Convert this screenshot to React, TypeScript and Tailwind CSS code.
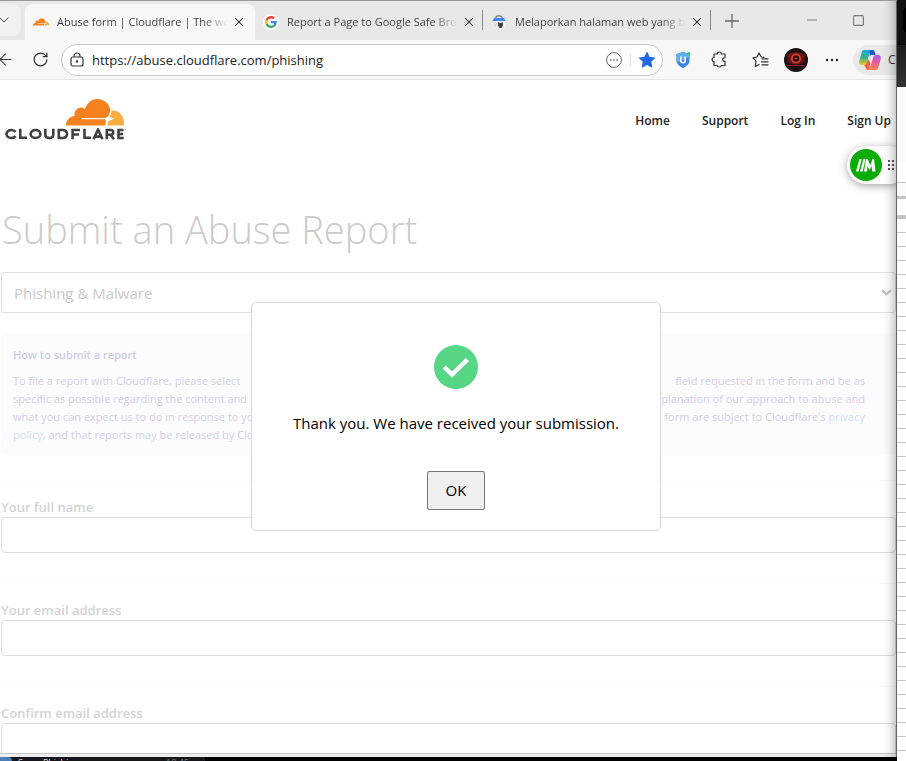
import React from "react";
import { ArrowLeft, ChevronDown, Minus, Plus, RotateCw, Square, X } from "lucide-react";

function CloudIcon({ className }: { className: string }) {
  return (
    <svg viewBox="0 0 58 27" className={className} aria-hidden="true">
      <path
        fill="#f6821f"
        d="M0 26.500C0 21 3.500 17.500 8.500 17C8 12 11 8.500 15 8.500C16.500 8.500 18 9 19 10C21 4 25.500 0 31.500 0C38.500 0 43.500 5 44.500 11.500L42.500 17L39.500 19H15.500V20.300H39L40 22.500L39 26.500Z"
      />
      <path
        fill="#fbad41"
        d="M46.500 11.500C53 11.500 58 17 58 23.500C58 25 57.800 26 57.500 26.500H41.500L42.500 22L48 19.700L43.800 18L46 11.500Z"
      />
    </svg>
  );
}

function GoogleIcon() {
  return (
    <span className="flex size-4 shrink-0 items-center justify-center rounded-full bg-white">
      <svg viewBox="0 0 48 48" className="size-3" aria-hidden="true">
        <path fill="#ea4335" d="M24 9.500c3.500 0 6.700 1.200 9.200 3.600l6.900-6.900C35.900 2.400 30.500 0 24 0 14.600 0 6.500 5.400 2.600 13.200l8 6.200C12.400 13.700 17.700 9.500 24 9.500z" />
        <path fill="#4285f4" d="M47 24.500c0-1.600-.2-3.100-.4-4.500H24v9h12.900c-.6 3-2.200 5.500-4.700 7.200l7.700 6C44.400 38 47 31.800 47 24.500z" />
        <path fill="#fbbc05" d="M10.500 28.600c-.5-1.500-.8-3-.8-4.600s.3-3.100.8-4.600l-8-6.200C.9 16.500 0 20.100 0 24s.9 7.500 2.600 10.800z" />
        <path fill="#34a853" d="M24 48c6.500 0 11.900-2.100 15.900-5.800l-7.700-6c-2.200 1.500-4.900 2.300-8.200 2.300-6.300 0-11.600-4.200-13.500-9.900l-8 6.200C6.500 42.600 14.600 48 24 48z" />
      </svg>
    </span>
  );
}

function ReportIcon() {
  return (
    <svg viewBox="0 0 16 16" className="size-4 shrink-0" aria-hidden="true">
      <path d="M5 4V3.300C5 2.300 6 1.800 8 1.800s3 .5 3 1.500V4" fill="none" stroke="#777" strokeWidth="1.300" />
      <path d="M3 4h10l1.500 3H1.500z" fill="#4285f4" />
      <path d="M2.500 7h11v6.500h-11z" fill="#f4f6fa" />
      <path d="M4 8v5M6 8v5" stroke="#c5cad3" />
      <path d="M7 8l2.500 1.300L12 8v3.500L10.500 14h-2L7 11.500z" fill="#444" />
    </svg>
  );
}

function Wordmark() {
  return (
    <svg viewBox="0 0 121 12" className="h-3 w-[121px]" role="img" aria-label="Cloudflare">
      <g fill="none" stroke="#404041" strokeWidth="2.600">
        <path d="M10.500 4C9.500 2.500 8 2 6.300 2C3.500 2 1.500 3.700 1.500 6S3.500 10 6.300 10C8 10 9.500 9.500 10.500 8" />
        <path d="M15.300 .8V9.700H22" />
        <ellipse cx="30.500" cy="6" rx="4.900" ry="4" />
        <path d="M40.300 .8V6.500C40.300 9 41.800 10 44.300 10S48.300 9 48.300 6.500V.8" />
        <path d="M53.800 2H57.500C60.500 2 62 3.800 62 6S60.500 10 57.500 10H53.800Z" />
        <path d="M75 2H67.600V11.200M67.600 6.500H74" />
        <path d="M79.500 .8V9.700H86" />
        <path d="M88.500 11.200L93 1.500L97.500 11.200M90.500 8.600H95.500" />
        <path d="M101.800 11.200V2H106C109 2 109 6.700 106 6.700H101.800M105.500 6.700L109 11.200" />
        <path d="M118.500 2H113.500V10H118.700M113.500 6H118" />
      </g>
      <circle cx="120.300" cy="1.500" r=".6" fill="#777" />
    </svg>
  );
}

function CopilotIcon() {
  return (
    <svg viewBox="0 0 22 20" className="h-5 w-[22px] shrink-0" aria-hidden="true">
      <defs>
        <linearGradient id="cpA" x1="0" y1="0" x2="0" y2="1">
          <stop offset="0" stopColor="#1ba8e8" />
          <stop offset=".5" stopColor="#35b08a" />
          <stop offset="1" stopColor="#f5c518" />
        </linearGradient>
        <linearGradient id="cpB" x1="0" y1="0" x2="0" y2="1">
          <stop offset="0" stopColor="#a05cf0" />
          <stop offset=".5" stopColor="#ec5a9c" />
          <stop offset="1" stopColor="#fb8a4c" />
        </linearGradient>
      </defs>
      <path d="M5 0H13L10 5L8 12C7.500 14 6.500 15 5 15H3C0 15 0 12.500 .5 10L2.500 3C3 1 3.700 0 5 0Z" fill="url(#cpA)" />
      <path d="M11 0H13.500C15 0 15.500 1 16 3L16.500 5H13C11.500 5 11 5.500 10.500 7Z" fill="#1559d6" />
      <path d="M17 20H9L12 15L14 8C14.500 6 15.500 5 17 5H19C22 5 22 7.500 21.500 10L19.500 17C19 19 18.300 20 17 20Z" fill="url(#cpB)" />
      <path d="M5 15C6.500 15 7.500 14 8 12L9 9L11.500 13L9.500 20C7.500 20 7 19 6.500 17Z" fill="#f2603c" />
    </svg>
  );
}

function Tab({ icon, title, className }: { icon: React.ReactNode; title: string; className: string }) {
  return (
    <div className={`flex h-9 shrink-0 items-center pl-2 ${className}`}>
      {icon}
      <span className="ml-2 w-[171px] bg-linear-to-r from-[#3a3a3a] from-85% to-transparent bg-clip-text text-[11px] leading-5 whitespace-nowrap text-transparent">
        {title}
      </span>
      <button aria-label="Close tab" className="ml-1 text-[#222]">
        <X size={14} strokeWidth={1.8} />
      </button>
    </div>
  );
}

function Toolbar() {
  return (
    <div className="flex h-10 items-center overflow-hidden border-b border-[#e6e6e6] bg-[#f7f7f7] text-[#333]">
      <button aria-label="Back" className="-ml-1 shrink-0">
        <ArrowLeft size={19} strokeWidth={1.3} />
      </button>
      <button aria-label="Reload" className="ml-[17px] shrink-0">
        <RotateCw size={17} strokeWidth={1.7} />
      </button>
      <div className="ml-3 flex h-8 min-w-0 flex-1 items-center rounded-full border border-[#c9c9c9] bg-white pr-[7px] pl-2">
        <svg viewBox="0 0 14 16" className="h-4 w-3.5 shrink-0" fill="none" stroke="#333" strokeWidth="1.200" aria-hidden="true">
          <rect x="1" y="5" width="12" height="9" rx="2" />
          <path d="M4 5V4a3 3 0 016 0v1" />
          <circle cx="7" cy="9.500" r=".6" fill="#333" />
        </svg>
        <input
          aria-label="Address"
          defaultValue="https://abuse.cloudflare.com/phishing"
          className="ml-2 min-w-0 flex-1 bg-transparent pt-0.5 text-[13px] text-[#222] outline-none"
        />
        <svg viewBox="0 0 16 16" className="size-4 shrink-0" fill="none" stroke="#666" aria-hidden="true">
          <circle cx="8" cy="8" r="7.400" />
          <path d="M4 8h1.500M7.300 8h1.500M10.500 8H12" strokeWidth="1.500" />
        </svg>
        <span className="ml-2 h-3.5 w-px bg-[#ddd]" />
        <svg viewBox="0 0 24 24" className="ml-2 size-4 shrink-0" fill="#2168ea" stroke="#2168ea" strokeWidth="2" strokeLinejoin="round" aria-hidden="true">
          <path d="M12 1l3.300 7.200 7.700.9-5.700 5.300 1.500 7.800L12 18.300 5.200 22.200l1.500-7.800L1 9.100l7.700-.9z" />
        </svg>
      </div>
      <div className="flex w-[233px] shrink-0 items-center pl-3">
        <svg viewBox="0 0 16 18" className="h-[18px] w-4 shrink-0" aria-hidden="true">
          <path d="M8 1l6.500 2v6c0 4-3 6.500-6.500 8C4.500 15.500 1.500 13 1.500 9V3z" fill="#3f86e0" />
          <path d="M8 1L1.500 3v6c0 1 .2 2 .5 2.800L14.500 6V3z" fill="#5cb0ee" />
          <path d="M5.800 5.500v4a2.200 2.200 0 004.400 0v-4" fill="none" stroke="#fff" strokeWidth="1.600" />
          <circle cx="13.800" cy="2.500" r="1.600" fill="#2dbf8d" />
        </svg>
        <button aria-label="Extensions" className="ml-5">
          <svg viewBox="0 0 17 17" className="size-[17px]" fill="none" stroke="#333" strokeWidth="1.200" strokeLinejoin="round" aria-hidden="true">
            <path d="M3 3H6.300C6.300 .3 10.300 .3 10.300 3H14V6.800C12.800 6.500 11.700 7.300 11.700 8.500S12.800 10.500 14 10.200V14.500H10.300C10.300 16.500 6.300 16.500 6.300 14.500H3V10.500C.5 10.500 .5 6.500 3 6.500Z" />
          </svg>
        </button>
        <span className="ml-3 h-4 w-px bg-[#ccc]" />
        <svg viewBox="0 0 18 16" className="ml-3 h-4 w-[18px] shrink-0" fill="none" stroke="#333" strokeWidth="1.200" strokeLinejoin="round" strokeLinecap="round" aria-hidden="true">
          <path d="M12 5.300L9.300 5 7 1 5 5 1 5.800l3 3.400-.8 5.300 3.800-2" />
          <path d="M10 6.800H16M9.500 9.800h6.500M10 12.800H16" />
        </svg>
        <svg viewBox="0 0 24 24" className="ml-3.5 size-6 shrink-0" aria-label="Profile" role="img">
          <circle cx="12" cy="12" r="12" fill="#1b1012" />
          <path d="M3 7Q12 1 21 7L20 14Q12 19 4 14Z" fill="#6d1516" />
          <circle cx="12" cy="10.500" r="5" fill="#d9402f" />
          <circle cx="12" cy="10.500" r="3.200" fill="#2a080a" />
          <circle cx="12" cy="10.500" r="1" fill="#e0523f" />
          <path d="M3 17.500h18" stroke="#8c2020" />
        </svg>
        <svg viewBox="0 0 14 4" className="ml-[17px] h-1 w-3.5 shrink-0" fill="#222" aria-hidden="true">
          <circle cx="2" cy="2" r="1.200" />
          <circle cx="7" cy="2" r="1.200" />
          <circle cx="12" cy="2" r="1.200" />
        </svg>
        <button className="ml-3.5 flex h-[30px] items-center gap-[7px] rounded-l-full bg-[#e8e8e8] pl-1.5 text-xs whitespace-nowrap">
          <CopilotIcon />
          Copilot
        </button>
      </div>
    </div>
  );
}

function Field({ id, label }: { id: string; label: string }) {
  return (
    <div className="ml-px border-t border-[#fafafa] pt-4 pb-[30px]">
      <label htmlFor={id} className="block text-[13px] leading-5 font-semibold text-[#d3d3d3]">
        {label}
      </label>
      <input id={id} type="text" className="block h-9 w-full rounded border border-[#dcdcdc] bg-white" />
    </div>
  );
}

const infoLines = [
  ["To file a report with Cloudflare, please select", "field requested in the form and be as"],
  ["specific as possible regarding the content and", "explanation of our approach to abuse and"],
];

function Page() {
  return (
    <main className="relative flex-1 overflow-hidden bg-white">
      <header className="flex items-start justify-between pt-[19px] pr-[5px] pl-[5px]">
        <a href="#home" className="flex flex-col items-start">
          <CloudIcon className="ml-[61px] h-[27px] w-[58px]" />
          <span className="mt-0.5">
            <Wordmark />
          </span>
        </a>
        <nav className="flex gap-8 pt-3 text-xs leading-5 font-semibold text-[#222]">
          <a href="#home">Home</a>
          <a href="#support">Support</a>
          <a href="#login">Log In</a>
          <a href="#signup">Sign Up</a>
        </nav>
      </header>
      <h1 className="mt-[65px] ml-0.5 text-[38px] leading-[48px] font-light text-[#cbcbcb]">Submit an Abuse Report</h1>
      <div className="relative mt-[19px] ml-px">
        <select
          aria-label="Report type"
          className="block h-[41px] w-full appearance-none rounded-[3px] border border-[#e0e0e0] bg-white px-3 pt-0.5 text-[15px] text-[#c8c8c8]"
        >
          <option>Phishing &amp; Malware</option>
        </select>
        <ChevronDown size={15} strokeWidth={3.5} className="pointer-events-none absolute top-[13px] right-0.5 text-[#c4c4c4]" />
      </div>
      <section className="mt-5 mb-[25px] ml-px rounded-sm bg-[#fcfcff] pt-3 pb-[11px] pl-3 text-[11px] leading-[18px] text-[#d3cfe6]">
        <h2 className="mb-[7px] leading-5 font-semibold text-[#d0cbe6]">How to submit a report</h2>
        <div className="pr-[31px] whitespace-nowrap">
          {infoLines.map(([a, b]) => (
            <p key={a} className="flex justify-between">
              <span>{a}</span>
              <span>{b}</span>
            </p>
          ))}
          <p className="flex justify-between">
            <span>what you can expect us to do in response to your</span>
            <span>
              form are subject to Cloudflare's <a href="#privacy" className="text-[#cfe0f5]">privacy</a>
            </span>
          </p>
          <p>
            <a href="#privacy" className="text-[#cfe0f5]">policy</a>, and that reports may be released by Cloudflare
          </p>
        </div>
      </section>
      <Field id="name" label="Your full name" />
      <Field id="email" label="Your email address" />
      <Field id="email2" label="Confirm email address" />

      <div className="absolute inset-y-0 -right-4 left-0 flex items-center justify-center">
        <div role="dialog" aria-label="Submission received" className="flex w-[410px] flex-col items-center rounded-[5px] border border-[#d6d6d6] bg-white pt-[42px] pb-5 text-black">
          <svg viewBox="0 0 44 44" className="size-11" aria-hidden="true">
            <circle cx="22" cy="22" r="22" fill="#56d584" />
            <path d="M10.200 22L18 29.500L33.500 14.500" fill="none" stroke="#fff" strokeWidth="4.500" />
          </svg>
          <p className="mt-[22px] text-[15px] leading-6 whitespace-nowrap">Thank you. We have received your submission.</p>
          <button className="mt-9 h-[39px] w-[58px] rounded-[2px] border border-[#767676] bg-[#efefef] text-[15px]">OK</button>
        </div>
      </div>

      <div className="absolute top-[66px] -right-3 flex h-[38px] w-[61px] items-center rounded-full bg-white pl-[3px] shadow-[0_2px_8px_rgba(0,0,0,0.35)]">
        <svg viewBox="0 0 32 32" className="size-8 shrink-0" aria-hidden="true">
          <circle cx="16" cy="16" r="16" fill="#0aad05" />
          <path d="M6 22.500L9.500 10h2.300L8.500 22.500zM10 22.500L13.500 10H15.500l-2.800 12.500z" fill="#fff" />
          <path d="M14 22.500L16 10h1.500l3 6.500L22.500 10h1.500l1.500 12.500h-3.200L21.500 17 20 20.500h-.8L17.500 17 17 22.500z" fill="#fff" />
        </svg>
        <svg viewBox="0 0 8 12" className="ml-[5px] h-3 w-2 shrink-0" fill="#555" aria-hidden="true">
          <path d="M1 1h2v2H1zM5 1h2v2H5zM1 5h2v2H1zM5 5h2v2H5zM1 9h2v2H1zM5 9h2v2H5z" />
        </svg>
      </div>
    </main>
  );
}

function BackgroundWindow() {
  return (
    <aside className="flex w-[9px] shrink-0 flex-col bg-white">
      <div className="h-11 bg-[#111] pt-2">
        <div className="ml-1.5 h-6 rounded-l-full bg-black" />
      </div>
      <div className="h-[43px] border-t border-black bg-linear-to-b from-[#1c1c1c] to-[#333]" />
      <div className="h-[75px] bg-[#f9fafd]" />
      <div className="h-5" />
      <div className="h-3.5 border-t border-[#c4c4c4] bg-[#f9fafd]" />
      <div className="h-[3px] bg-[#c4c4c4]" />
      <div className="h-4" />
      <div className="h-1 bg-[#c4c4c4]" />
      <div className="flex-1 bg-[repeating-linear-gradient(to_bottom,white_0px,white_13px,#c4c4c4_13px,#c4c4c4_14px)]" />
    </aside>
  );
}

export default function App() {
  return (
    <div className="flex h-screen overflow-hidden bg-black font-['Open_Sans','Noto_Sans',sans-serif]">
      <div className="flex min-w-0 flex-1 flex-col">
        <div className="relative flex min-h-0 flex-1 flex-col overflow-hidden border-t border-r border-t-[#999] border-r-[#666]">
          <div className="flex h-[39px] shrink-0 items-end bg-[#e8e8e8] text-[#444]">
            <div className="flex h-9 w-[25px] shrink-0 items-start">
              <button aria-label="Tab actions" className="flex h-8 w-[21px] items-center rounded-r-lg bg-[#f0f0f0]">
                <ChevronDown size={16} strokeWidth={1.5} className="-ml-1" />
              </button>
            </div>
            <Tab className="w-[230px] rounded-t-lg bg-[#f7f7f7]" icon={<CloudIcon className="h-2 w-4 shrink-0" />} title="Abuse form | Cloudflare | The we" />
            <Tab className="w-[227px]" icon={<GoogleIcon />} title="Report a Page to Google Safe Bro" />
            <span className="mb-2.5 h-5 w-px shrink-0 bg-[#888]" />
            <Tab className="w-[227px]" icon={<ReportIcon />} title="Melaporkan halaman web yang b" />
            <span className="mb-2.5 h-5 w-px shrink-0 bg-[#888]" />
            <button aria-label="New tab" className="mb-2 ml-2.5 shrink-0 text-[#666]">
              <Plus size={22} strokeWidth={1.4} />
            </button>
            <div className="mb-3 ml-auto flex items-center gap-8 pr-[31px] text-[#777]">
              <button aria-label="Minimize">
                <Minus size={16} strokeWidth={1.4} />
              </button>
              <button aria-label="Maximize">
                <Square size={13} strokeWidth={2} />
              </button>
            </div>
          </div>
          <Toolbar />
          <Page />
          <div className="h-1 shrink-0 border-t border-[#c8c8c8] bg-[#eee]" />
          <div className="pointer-events-none absolute inset-y-0 right-0 w-3.5 bg-linear-to-r from-transparent via-black/5 to-black/20" />
        </div>
        <div className="flex h-1 shrink-0 items-start overflow-hidden bg-black text-[9px] leading-3 text-[#ddd]">
          <div className="flex w-[205px] items-start bg-[#17171b]">
            <span className="h-1 w-3 rounded-tr-sm bg-[#4a80b5]" />
            <span className="ml-1.5">Scam Phishing</span>
            <span className="ml-auto pr-4 text-[#777]">18:45</span>
          </div>
        </div>
      </div>
      <BackgroundWindow />
    </div>
  );
}
